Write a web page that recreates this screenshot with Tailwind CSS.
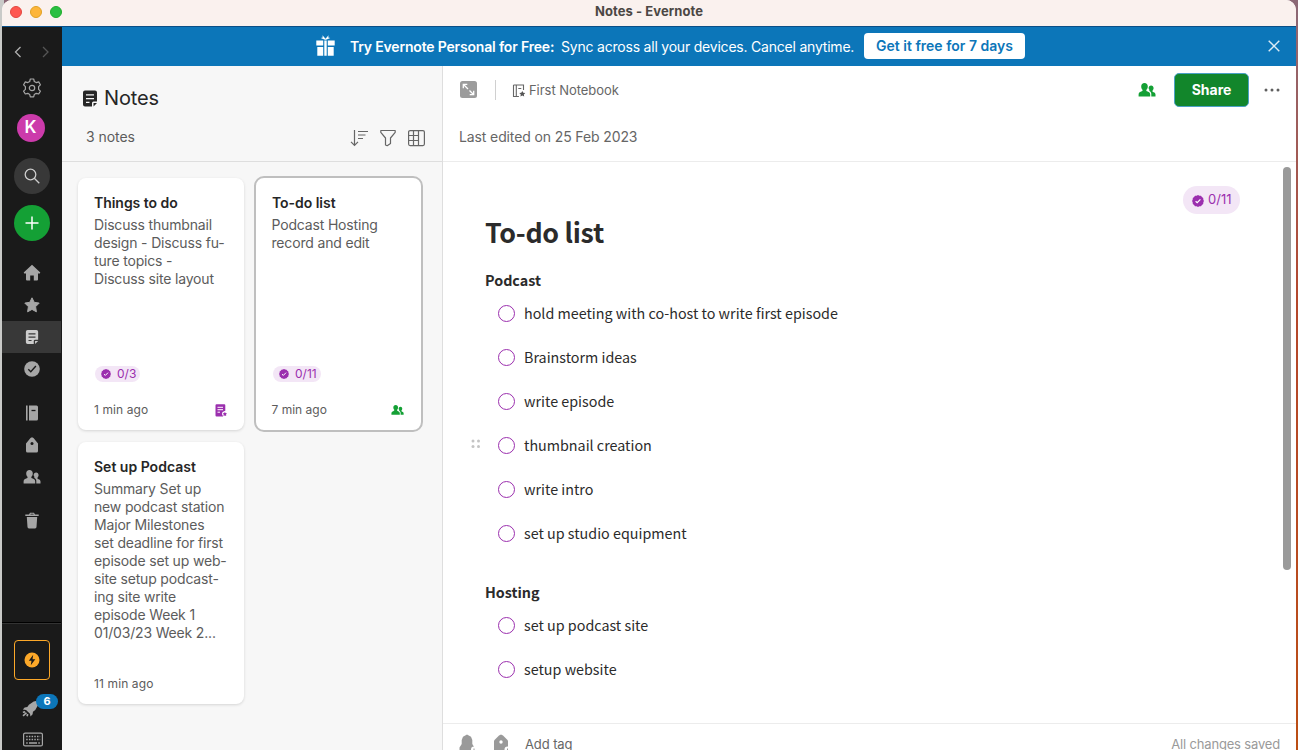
<!DOCTYPE html>
<html lang="en">
<head>
<meta charset="utf-8">
<title>Notes - Evernote</title>
<script src="https://cdn.jsdelivr.net/npm/@tailwindcss/browser@4"></script>
</head>
<body class="relative h-[750px] w-[1298px] overflow-hidden bg-linear-to-b from-[#8b6876] via-[#b4472c] via-40% to-[#bb4d13] font-['Inter',sans-serif] text-[#333]">
<svg class="hidden">
  <symbol id="people" viewBox="0 0 18 16"><path d="M6.500 1c2 0 3.300 1.500 3.300 3.500 0 1.400-.7 2.600-1.400 3.300-.3 1 .2 1.400 1.300 1.800 1.500.6 2.400 1.200 2.500 2.800V14.500H.6v-2.100c.1-1.600 1-2.200 2.500-2.800 1.200-.4 1.700-.8 1.400-1.800C3.800 7.100 3.200 5.900 3.200 4.500 3.200 2.500 4.500 1 6.500 1zM13.100 3.400c1.500 0 2.500 1.200 2.500 2.700 0 1.200-.5 2-1.100 2.600-.2.900.2 1.200 1.100 1.600 1.100.4 1.800 1 1.900 2.300v1.900h-4.200v-2.300c0-1.500-.7-2.400-1.900-3.100-.3-.4-.1-.8.100-1-.5-.5-.9-1.200-.9-2 0-1.500 1-2.700 2.500-2.700z"/></symbol>
  <symbol id="note" viewBox="0 0 16 18"><path fill-rule="evenodd" d="M3 1h10a2 2 0 0 1 2 2v9h-3.500a1.500 1.500 0 0 0-1.500 1.500V17H3a2 2 0 0 1-2-2V3a2 2 0 0 1 2-2zm1 3.700V6h8V4.700zm0 3.800v1.300h8V8.500zm0 3.800v1.300h3.500v-1.300zM11.500 13.500H15L11.500 17z"/></symbol>
  <symbol id="badge" viewBox="0 0 12 12"><path fill="#9b2fae" d="M6 .1 7.400.7 9 .8l.9 1.300 1.300.9.1 1.600.6 1.400-.6 1.400-.1 1.600-1.300.9-.9 1.300-1.600.1-1.400.6-1.400-.6-1.600-.1-.9-1.300L.8 9 .7 7.400.1 6l.6-1.400L.8 3l1.300-.9L3 .8l1.600-.1z"/><path d="M3.600 6.200 5.200 7.700 8.400 4.400" fill="none" stroke="#fff" stroke-width="1.200"/></symbol>
</svg>
<div class="absolute inset-y-0 left-0 w-1 bg-[#c9cac8]"></div>

<div class="relative ml-[2px] flex h-[750px] w-[1294px] flex-col overflow-hidden rounded-t-[10px] bg-white">
  <!-- Title bar -->
  <header class="relative flex h-[27px] shrink-0 items-center border-b border-[#0a4f87] bg-[#faf1ee]">
    <div class="flex gap-2 pb-[3px] pl-2">
      <span class="size-3 rounded-full border border-[#e2463f] bg-[#fe5750]"></span>
      <span class="size-3 rounded-full border border-[#dfa023] bg-[#fdb53a]"></span>
      <span class="size-3 rounded-full border border-[#1dad2b] bg-[#2abf42]"></span>
    </div>
    <h1 class="absolute inset-x-0 top-[2px] text-center text-[13px]/[18px] font-bold tracking-[0.08px] text-[#4c4744]">Notes - Evernote</h1>
  </header>

  <div class="flex min-h-0 flex-1">
    <!-- Sidebar -->
    <nav class="flex w-[60px] shrink-0 flex-col bg-[#1a1a1a] text-[#a6a6a6]">
      <div class="mt-[17px] flex h-4 items-center justify-between pr-[10px] pl-[10px]">
        <svg class="size-[14px] text-[#b0b0b0]" viewBox="0 0 14 14" fill="none" stroke="currentColor" stroke-width="1.300"><path d="M8.500 2 3.500 7l5 5"/></svg>
        <svg class="size-[14px] text-[#555]" viewBox="0 0 14 14" fill="none" stroke="currentColor" stroke-width="1.300"><path d="m5 2 5 5-5 5"/></svg>
      </div>
      <svg class="mt-[18px] ml-5 size-5" viewBox="0 0 20 20" fill="none" stroke="currentColor" stroke-width="1.200" stroke-linejoin="round"><circle cx="10" cy="10" r="2.700"/><path d="M8.300 1h3.400l.6 2.500 1.900 1.100 2.500-.7 1.700 2.900-1.800 1.800v2.700l1.800 1.800-1.700 2.900-2.500-.7-1.900 1.100-.6 2.500H8.300l-.6-2.500-1.900-1.100-2.500.7-1.700-2.900 1.800-1.800V8.600L1.600 6.800l1.700-2.900 2.500.7 1.900-1.100z"/></svg>
      <div class="mt-4 ml-[15px] flex size-7 items-center justify-center rounded-full bg-[#cc3bab] pr-px text-[17px] font-semibold text-white">K</div>
      <div class="mt-4 ml-3 flex size-9 items-center justify-center rounded-full bg-[#383838] text-[#ccc]">
        <svg class="size-4" viewBox="0 0 16 16" fill="none" stroke="currentColor" stroke-width="1.300"><circle cx="6.500" cy="6.500" r="5.300"/><path d="m10.300 10.300 5 5"/></svg>
      </div>
      <div class="mt-[11px] ml-3 flex size-9 items-center justify-center rounded-full bg-[#14a035] text-white">
        <svg class="size-4" viewBox="0 0 16 16" stroke="currentColor" stroke-width="1.500"><path d="M8 1.500v13M1.500 8h13"/></svg>
      </div>
      <div class="mt-4 flex h-8 items-center pl-[21px]"><svg class="size-[18px]" viewBox="0 0 18 18" fill="currentColor"><path d="M9 .8 17.300 8.500l-.5.900H15V15.500q0 1-1 1h-3.200v-5H7.200v5H4q-1 0-1-1V9.400H1.200L.7 8.500z"/></svg></div>
      <div class="flex h-8 items-center pl-[21px]"><svg class="size-[18px]" viewBox="0 0 18 18" fill="currentColor" stroke="currentColor" stroke-linejoin="round"><path d="m9 1.800 2.200 4.500 5 .8-3.600 3.600.8 5.100L9 13.400l-4.400 2.400.8-5.100L1.800 7.100l5-.8z"/></svg></div>
      <div class="flex h-8 w-[59px] items-center bg-[#383838] pl-[23px] text-[#ccc]"><svg class="h-4 w-[14px]" fill="currentColor"><use href="#note"/></svg></div>
      <div class="flex h-8 items-center pl-[22px]"><svg class="size-4" viewBox="0 0 16 16"><circle cx="8" cy="8" r="7.800" fill="currentColor"/><path d="m4.300 8.300 2.500 2.400L11.900 5" fill="none" stroke="#1a1a1a" stroke-width="1.400"/></svg></div>
      <div class="mt-3 flex h-8 items-center pl-[22px]"><svg class="size-4" viewBox="0 0 16 16" fill="currentColor"><path d="M2 .5h1.600v15H2zM5 .5h7.500A1.500 1.500 0 0 1 14 2v12a1.500 1.500 0 0 1-1.500 1.500H5z"/><path d="M7.500 5.500h4" stroke="#1a1a1a" stroke-width="1.300"/></svg></div>
      <div class="flex h-8 items-center pl-[22px]"><svg class="size-4" viewBox="0 0 16 16" fill="currentColor"><path d="m8 .3 1.500.8L14 6.500V14a1.500 1.500 0 0 1-1.500 1.500h-9A1.500 1.500 0 0 1 2 14V6.500l4.500-5.400z"/><circle cx="8" cy="6.500" r="1.500" fill="#1a1a1a"/></svg></div>
      <div class="flex h-8 items-center pl-[21px]"><svg class="h-4 w-[18px]" fill="currentColor"><use href="#people"/></svg></div>
      <div class="mt-[11px] flex h-8 items-center pl-[22px]"><svg class="h-[17px] w-4" viewBox="0 0 16 17" fill="currentColor"><path d="M5 2.500 6 .7h4l1 1.800h3.700v1.600H1.300V2.500zM6.300 2.500h3.400l-.5-.8H6.800zM2.800 5h10.400l-.7 10a1.500 1.500 0 0 1-1.500 1.400H5A1.500 1.500 0 0 1 3.500 15z"/></svg></div>
      <div class="mt-[86px] h-[2px] w-[59px] border-t border-black bg-[#333]"></div>
      <div class="mt-4 ml-3 flex h-10 w-9 items-center justify-center rounded-[4px] border border-[#fca829]">
        <svg class="size-4" viewBox="0 0 16 16"><circle cx="8" cy="8" r="7.500" fill="#fca829"/><path d="m9.200 2.800-4.400 6h2.700l-.7 4.500 4.500-6.100H8.500z" fill="#1a1a1a"/></svg>
      </div>
      <div class="relative mt-5 ml-5 h-4 w-10">
        <svg class="size-[17px]" viewBox="0 0 16 16" fill="currentColor"><path d="M15.500.5 11 1.500 6.500 4.500 5 6.500 2.500 7 .8 9l3 .5L7.500 13l.5 2.500L10 13.500l.3-2.500 2.200-1.500 2.500-4.500z"/><path d="m.8 11.500 2.200-.3M1 15l3.200-3M4.800 15.300 5.300 13.200" stroke="currentColor" stroke-width="1.600"/></svg>
        <span class="absolute -top-[6px] left-[14px] flex h-[15px] w-[22px] items-center justify-center rounded-full bg-[#0c76b9] text-[11px] font-bold text-white">6</span>
      </div>
      <svg class="mt-4 ml-[21px] h-[15px] w-5 shrink-0" viewBox="0 0 20 15" fill="none" stroke="currentColor"><rect x=".6" y="1.100" width="18.800" height="12.800" rx="1.500" stroke-width="1.200"/><path stroke-dasharray="1.500 1.200" stroke-width="1.500" d="M3.200 4.500h14M3.200 7.500h14"/><path stroke-width="1.300" d="M3.200 11h1.500M6 11h8M15.300 11h1.500"/></svg>
    </nav>

    <div class="flex min-w-0 flex-1 flex-col">
      <!-- Promotion banner -->
      <div class="relative flex h-[39px] shrink-0 items-center bg-[#0c76b9] pl-[254px] text-sm text-white">
        <svg class="mb-[2px] h-[21px] w-[19px]" viewBox="0 0 19 21" fill="#fff"><path d="M.3 5.500h6.900v5H.3zM11.800 5.500h6.900v5h-6.900zM8.300 5.500h2.400v15.200H8.300zM1.300 12h5.900v8.700H1.300zM11.800 12h5.900v8.700h-5.900zM8.900 4.800 4.700 3l2-.6L6.500.3l3 3.400 3-3.400-.2 2.100 2 .6-4.200 1.800z"/></svg>
        <strong class="mt-px ml-[15px] w-[203px] font-semibold tracking-[-0.18px] whitespace-nowrap">Try Evernote Personal for Free:</strong>
        <span class="mt-px ml-2 w-[293px] tracking-[-0.21px] whitespace-nowrap">Sync across all your devices. Cancel anytime.</span>
        <a class="mb-px ml-[10px] flex h-[26px] w-[161px] items-center justify-center rounded-[4px] bg-white font-semibold tracking-[0px] text-[#0c76b9]">Get it free for 7 days</a>
        <svg class="absolute top-[13px] right-4 size-3" viewBox="0 0 12 12" stroke="#dcebf5" stroke-width="1.400"><path d="m.7.7 10.600 10.600M11.300.7.700 11.300"/></svg>
      </div>

      <div class="flex min-h-0 flex-1">
        <!-- Note list -->
        <section class="flex w-[381px] shrink-0 flex-col border-r border-[#dedede] bg-[#f7f7f7]">
          <div class="h-24 shrink-0 border-b border-[#dedede]">
            <h2 class="mt-[18px] ml-[19.500px] flex h-7 items-center text-xl text-[#262626]"><svg class="mr-[6.500px] h-[19px] w-4" fill="#262626"><use href="#note"/></svg><span class="tracking-[-0.15px]">Notes</span></h2>
            <div class="mt-[15px] flex h-5 items-center pr-[17px] pl-6 text-sm text-[#5c5c5c]">
              <span class="tracking-[-0.05px]">3 notes</span>
              <div class="ml-auto flex items-center gap-3 pt-[2px]">
                <svg class="h-[18px] w-[18px]" viewBox="0 0 18 18" fill="none" stroke="#666" stroke-width="1.200"><path d="M4.500 1v15M1 12.800l3.500 3.500L8 12.800M8 2.500h10M8 6h7.500M8 9.500h5"/></svg>
                <svg class="h-[18px] w-[16px]" viewBox="0 0 16 18" fill="none" stroke="#666" stroke-width="1.200" stroke-linejoin="round"><path d="M.8 1.500h14.400v1.800L10.500 9v5.500l-3.300 2.200L5.500 16V9L.8 3.300z"/></svg>
                <svg class="h-[18px] w-[17px]" viewBox="0 0 17 18" fill="none" stroke="#666" stroke-width="1.200"><rect x=".6" y="1.600" width="15.800" height="15" rx="1.500"/><path d="M5.500 1.600v15M10.500 1.600v15M.6 6.500h9.900M.6 11.500h9.900"/></svg>
              </div>
            </div>
          </div>

          <div class="grid grid-cols-[166px_169px] items-start gap-x-[10px] pt-[14px] pl-4 text-sm/[18px] text-[#5c5c5c]">
            <article class="mt-[2px] flex h-[252px] flex-col rounded-lg bg-white px-4 pt-4 pb-[11px] shadow-[0_1px_3px_rgba(0,0,0,0.14)]">
              <h3 class="mb-1 font-semibold tracking-[-0.04px] text-[#262626]">Things to do</h3>
              <div class="tracking-[-0.17px] whitespace-nowrap"><p>Discuss thumbnail</p><p>design - Discuss fu-</p><p>ture topics -</p><p>Discuss site layout</p></div>
              <div class="mt-auto mb-[19px] ml-[1px] flex h-4 w-[45px] items-center rounded-full bg-[#f3e6f6] pl-[6px] text-xs text-[#9b2fae]"><svg class="mr-[6px] size-[10px]"><use href="#badge"/></svg>0/3</div>
              <div class="flex h-[18px] items-center justify-between pr-px text-xs"><span class="tracking-[0.1px]">1 min ago</span><svg class="h-[13px] w-3" viewBox="0 0 12 13" fill="#9b2fae"><path d="M1.500.3h7.800a1 1 0 0 1 1 1v5.500L7.500 8l-.6 2 1.300 2.500H1.500a1 1 0 0 1-1-1V1.300a1 1 0 0 1 1-1z"/><path d="m9.900 7.900.7 1.200 1.400.3-1 1 .2 1.600-1.300-.6-1.400.6.200-1.600-1-1 1.500-.3z"/><path d="M2.500 3.300H8M2.500 5.700H8M2.500 8.200h2.500" stroke="#fff"/></svg></div>
            </article>
            <article class="flex h-64 flex-col rounded-[10px] border-2 border-[#bfbfbf] bg-white px-4 pt-4 pb-[11px]">
              <h3 class="mb-1 font-semibold tracking-[-0.04px] text-[#262626]">To-do list</h3>
              <div class="-ml-[0.500px] tracking-[-0.17px] whitespace-nowrap"><p>Podcast Hosting</p><p>record and edit</p></div>
              <div class="mt-auto mb-[19px] ml-[1px] flex h-4 w-12 items-center rounded-full bg-[#f3e6f6] pl-[6px] text-xs text-[#9b2fae]"><svg class="mr-[6px] size-[10px]"><use href="#badge"/></svg>0/11</div>
              <div class="flex h-[18px] items-center justify-between pr-px text-xs"><span class="-ml-[0.500px]">7 min ago</span><svg class="h-3 w-[13px]" fill="#14a035"><use href="#people"/></svg></div>
            </article>
            <article class="mt-[10px] flex h-[262px] flex-col rounded-lg bg-white px-4 pt-4 pb-[11px] shadow-[0_1px_3px_rgba(0,0,0,0.14)]">
              <h3 class="mb-1 font-semibold tracking-[0px] text-[#262626]">Set up Podcast</h3>
              <div class="tracking-[-0.17px] whitespace-nowrap"><p>Summary Set up</p><p>new podcast station</p><p>Major Milestones</p><p>set deadline for first</p><p>episode set up web-</p><p>site setup podcast-</p><p>ing site write</p><p>episode Week 1</p><p>01/03/23 Week 2...</p></div>
              <span class="mt-auto text-xs/[18px] tracking-[0.12px]">11 min ago</span>
            </article>
          </div>
        </section>

        <!-- Editor -->
        <main class="flex min-w-0 flex-1 flex-col">
          <div class="h-24 shrink-0 border-b border-[#ececec]">
            <div class="flex h-12 items-center pr-4 pl-[17px]">
              <svg class="mb-px size-[17px]" viewBox="0 0 17 17"><rect width="17" height="17" rx="2.500" fill="#9c9c9c"/><path d="M3.300 7.300v-4h4M3.500 3.500 8 8M9.500 9.500l4 4M9.700 13.700h4v-4" fill="none" stroke="#fff" stroke-width="1.300"/></svg>
              <span class="ml-[18px] h-5 w-px bg-[#d0d0d0]"></span>
              <svg class="mt-px ml-4 h-[14px] w-[14px]" viewBox="0 0 14 14" fill="none" stroke="#666" stroke-width="1.100"><path d="M1.500 1h10v5M4.300 1v11.500M1.500 1v11.500h5.400M6.300 4.500h3"/><path d="m10.300 7 1 1.800 2 .3-1.500 1.400.4 2.100-1.900-1-1.900 1 .4-2.100L7.300 9.100l2-.3z" fill="#555" stroke="none"/></svg>
              <span class="mt-[2px] ml-[3px] text-[13px] tracking-[-0.05px] text-[#666]">First Notebook</span>
              <svg class="ml-auto h-4 w-[18px]" fill="#14a035"><use href="#people"/></svg>
              <button class="ml-[18px] h-[34px] w-[75px] rounded-[5px] border border-[#4ba1c5] bg-[#12862b] text-sm font-bold text-white">Share</button>
              <svg class="ml-[15px] h-1 w-4" viewBox="0 0 16 4" fill="#5f5f5f"><circle cx="2" cy="2" r="1.500"/><circle cx="8" cy="2" r="1.500"/><circle cx="14" cy="2" r="1.500"/></svg>
            </div>
            <p class="mt-[13px] pl-4 text-sm tracking-[-0.12px] text-[#666]">Last edited on 25 Feb 2023</p>
          </div>

          <div class="relative min-h-0 flex-1 pl-[42px] font-['Noto_Sans_CJK_SC','Noto_Sans_CJK_JP',sans-serif] text-[#2b2b2b]">
            <div class="absolute top-6 right-14 flex h-7 w-[57px] items-center rounded-full bg-[#f3e6f6] pl-[9px] font-['Inter',sans-serif] text-[13px] text-[#9b2fae]"><svg class="mt-px mr-1 size-3"><use href="#badge"/></svg>0/11</div>
            <div class="absolute top-[5px] right-[5px] h-[403px] w-2 rounded-full bg-[#9a9a9a]"></div>
            <h2 class="pt-[50px] text-[26.800px]/[40px] font-bold tracking-[-0.300px]">To-do list</h2>
            <h3 class="mt-[18px] text-[14.320px]/[20px] font-bold">Podcast</h3>
            <ul class="mt-[1px] text-[14.320px]">
              <li class="flex h-11 items-center pl-[12.500px]"><span class="size-[17px] rounded-full border border-[#9b2fae]"></span><span class="ml-[9.500px]">hold meeting with co-host to write first episode</span></li>
              <li class="flex h-11 items-center pl-[12.500px]"><span class="size-[17px] rounded-full border border-[#9b2fae]"></span><span class="ml-[9.500px]">Brainstorm ideas</span></li>
              <li class="flex h-11 items-center pl-[12.500px]"><span class="size-[17px] rounded-full border border-[#9b2fae]"></span><span class="ml-[9.500px]">write episode</span></li>
              <li class="relative flex h-11 items-center pl-[12.500px]"><svg class="absolute top-[16px] -left-[14px] size-[10px]" viewBox="0 0 10 10" fill="#c4c4c4"><circle cx="2" cy="2" r="1.500"/><circle cx="7.500" cy="2" r="1.500"/><circle cx="2" cy="7.500" r="1.500"/><circle cx="7.500" cy="7.500" r="1.500"/></svg><span class="size-[17px] rounded-full border border-[#9b2fae]"></span><span class="ml-[9.500px]">thumbnail creation</span></li>
              <li class="flex h-11 items-center pl-[12.500px]"><span class="size-[17px] rounded-full border border-[#9b2fae]"></span><span class="ml-[9.500px]">write intro</span></li>
              <li class="flex h-11 items-center pl-[12.500px]"><span class="size-[17px] rounded-full border border-[#9b2fae]"></span><span class="ml-[9.500px]">set up studio equipment</span></li>
            </ul>
            <h3 class="mt-[27px] text-[14.320px]/[20px] font-bold">Hosting</h3>
            <ul class="mt-[1px] text-[14.320px]">
              <li class="flex h-11 items-center pl-[12.500px]"><span class="size-[17px] rounded-full border border-[#9b2fae]"></span><span class="ml-[9.500px]">set up podcast site</span></li>
              <li class="flex h-11 items-center pl-[12.500px]"><span class="size-[17px] rounded-full border border-[#9b2fae]"></span><span class="ml-[9.500px]">setup website</span></li>
            </ul>
          </div>

          <footer class="flex h-[27px] shrink-0 items-start border-t border-[#ececec] pr-4 pl-4 text-[13px] text-[#666]">
            <svg class="mt-[10px] size-4" viewBox="0 0 16 16" fill="#9a9a9a"><path d="m8 .5 4 2.200 1.300 3.300v4L15.500 13.500V16H.5v-2.500L2.700 10V6L4 2.700z"/><circle cx="15" cy="15.500" r="3" fill="#fff"/><path d="M15 14.500v2" stroke="#9a9a9a"/></svg>
            <svg class="mt-[10px] ml-[18px] size-4" viewBox="0 0 16 16" fill="#9a9a9a"><path d="m8 .5 2 1 5 5V16H1V6.500l5-5z"/><circle cx="8" cy="8" r="1.700" fill="#fff"/><circle cx="14.500" cy="15.500" r="3" fill="#fff"/><path d="M14.500 14.500v2" stroke="#9a9a9a"/></svg>
            <span class="mt-[11px] ml-4 tracking-[-0.1px]">Add tag</span>
            <span class="mt-[11px] ml-auto tracking-[-0.17px] text-[#9a9a9a]">All changes saved</span>
          </footer>
        </main>
      </div>
    </div>
  </div>
</div>
</body>
</html>
